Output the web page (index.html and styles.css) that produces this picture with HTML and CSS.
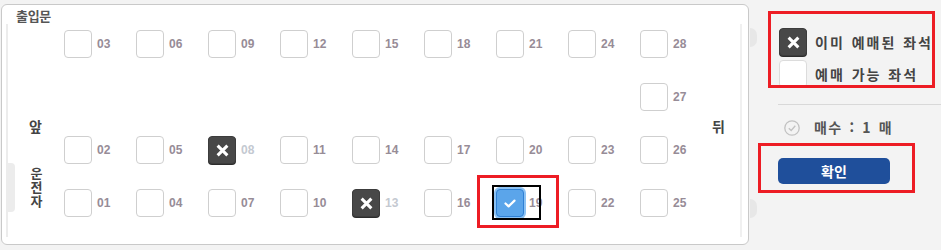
FILE: index.html
```html
<!DOCTYPE html>
<html lang="ko">
<head>
<meta charset="utf-8">
<title>좌석 선택</title>
<link rel="stylesheet" href="styles.css">
</head>
<body>
<div class="page">
  <section class="panel">
    <div class="door">출입문</div>
    <div class="deck">
      <div class="side-left">
        <span class="front">앞</span>
        <div class="driver"><span class="driver-tab"></span><span class="driver-text">운전자</span></div>
      </div>
      <div class="side-right"><span class="back">뒤</span></div>

      <div class="seat"><span class="box"></span><span class="num">03</span></div>
      <div class="seat"><span class="box"></span><span class="num">06</span></div>
      <div class="seat"><span class="box"></span><span class="num">09</span></div>
      <div class="seat"><span class="box"></span><span class="num">12</span></div>
      <div class="seat"><span class="box"></span><span class="num">15</span></div>
      <div class="seat"><span class="box"></span><span class="num">18</span></div>
      <div class="seat"><span class="box"></span><span class="num">21</span></div>
      <div class="seat"><span class="box"></span><span class="num">24</span></div>
      <div class="seat"><span class="box"></span><span class="num">28</span></div>

      <div class="gap"></div><div class="gap"></div><div class="gap"></div><div class="gap"></div>
      <div class="gap"></div><div class="gap"></div><div class="gap"></div><div class="gap"></div>
      <div class="seat"><span class="box"></span><span class="num">27</span></div>

      <div class="seat"><span class="box"></span><span class="num">02</span></div>
      <div class="seat"><span class="box"></span><span class="num">05</span></div>
      <div class="seat booked"><span class="box"><svg class="x" viewBox="0 0 12 12"><path d="M1.5 1.5 L10.5 10.5 M10.5 1.5 L1.5 10.5"/></svg></span><span class="num">08</span></div>
      <div class="seat"><span class="box"></span><span class="num">11</span></div>
      <div class="seat"><span class="box"></span><span class="num">14</span></div>
      <div class="seat"><span class="box"></span><span class="num">17</span></div>
      <div class="seat"><span class="box"></span><span class="num">20</span></div>
      <div class="seat"><span class="box"></span><span class="num">23</span></div>
      <div class="seat"><span class="box"></span><span class="num">26</span></div>

      <div class="seat"><span class="box"></span><span class="num">01</span></div>
      <div class="seat"><span class="box"></span><span class="num">04</span></div>
      <div class="seat"><span class="box"></span><span class="num">07</span></div>
      <div class="seat"><span class="box"></span><span class="num">10</span></div>
      <div class="seat booked"><span class="box"><svg class="x" viewBox="0 0 12 12"><path d="M1.5 1.5 L10.5 10.5 M10.5 1.5 L1.5 10.5"/></svg></span><span class="num">13</span></div>
      <div class="seat"><span class="box"></span><span class="num">16</span></div>
      <div class="seat selected"><span class="box"><svg class="check" viewBox="0 0 12 9"><path d="M1.5 4.5 L4.6 7.4 L10.5 1.6"/></svg></span><span class="num">19</span></div>
      <div class="seat"><span class="box"></span><span class="num">22</span></div>
      <div class="seat"><span class="box"></span><span class="num">25</span></div>
    </div>
  </section>

  <aside class="side">
    <div class="legend">
      <div class="legend-row"><span class="box booked-box"><svg class="x" viewBox="0 0 12 12"><path d="M1.5 1.5 L10.5 10.5 M10.5 1.5 L1.5 10.5"/></svg></span><span class="legend-text">이미 예매된 좌석</span></div>
      <div class="legend-row"><span class="box free-box"></span><span class="legend-text">예매 가능 좌석</span></div>
    </div>
    <div class="rule"></div>
    <div class="count">
      <svg class="count-icon" viewBox="0 0 16 16"><circle cx="8" cy="8" r="7.2"/><path d="M4.8 8.2 L7.2 10.5 L11.3 5.8"/></svg>
      <span class="count-text">매수 : 1 매</span>
    </div>
    <div class="confirm-wrap">
      <button class="confirm" type="button">확인</button>
    </div>
  </aside>
</div>
</body>
</html>
```

FILE: styles.css
```css
html, body {
  margin: 0;
  padding: 0;
}

body {
  background: #f3f3f3;
  font-family: "Noto Sans CJK KR", "Noto Sans", sans-serif;
  color: #444;
}

.page {
  display: flex;
  width: 941px;
  height: 250px;
  overflow: hidden;
}

.panel {
  position: relative;
  margin: 4px 0 0 1px;
  width: 748px;
  height: 241px;
  box-sizing: border-box;
  border: 1px solid #c9c9c9;
  border-radius: 6px;
  background: #fff;
  display: flex;
  flex-direction: column;
  flex: none;
}

.panel::before,
.panel::after {
  content: "";
  position: absolute;
  right: -9px;
  width: 7px;
  height: 19px;
  background: #e7e7e7;
  border-radius: 0 9px 9px 0;
}

.panel::before {
  top: 23px;
}

.panel::after {
  top: 194px;
}

.door {
  height: 19px;
  box-sizing: border-box;
  padding: 3px 0 0 14px;
  font-size: 13px;
  line-height: 16px;
  font-weight: 700;
  color: #555;
  letter-spacing: -0.3px;
}

.deck {
  margin: 0 6px 7px 4px;
  flex: 1;
  border-left: 2px solid #ececec;
  border-right: 2px solid #f0f0f0;
  padding-top: 6px;
  display: grid;
  grid-template-columns: 56px repeat(9, 72px) 28px;
  grid-template-rows: repeat(4, 28px);
  row-gap: 25px;
  align-content: start;
}

.side-left {
  grid-column: 1;
  grid-row: 1 / 5;
  padding-top: 88px;
  display: flex;
  flex-direction: column;
  align-items: flex-start;
}

.front,
.back {
  display: block;
  font-size: 14px;
  line-height: 16px;
  font-weight: 700;
  color: #444;
}

.front {
  margin-left: 21px;
}

.driver {
  margin-top: 29px;
  display: flex;
  align-items: center;
}

.driver-tab {
  width: 7px;
  height: 49px;
  background: #ececec;
  border-radius: 0 4px 4px 0;
}

.driver-text {
  margin-left: 14px;
  writing-mode: vertical-lr;
  text-orientation: upright;
  font-size: 13px;
  line-height: 14px;
  letter-spacing: 1px;
  font-weight: 700;
  color: #444;
}

.side-right {
  grid-column: 11;
  grid-row: 1 / 5;
  padding-top: 88px;
}

.seat {
  position: relative;
  display: flex;
  align-items: center;
  gap: 5px;
  height: 28px;
}

.box {
  width: 28px;
  height: 28px;
  box-sizing: border-box;
  border: 1px solid #cfcfcf;
  border-radius: 4px;
  background: #fff;
  display: flex;
  align-items: center;
  justify-content: center;
  flex: none;
}

.num {
  font-family: "Liberation Sans", Arial, sans-serif;
  font-size: 12px;
  font-weight: 700;
  color: #978c97;
}

.booked .box,
.booked-box {
  background: #484848;
  border-color: #3c3c3c;
  box-shadow: 0 1px 0 #2c2c2c;
}

.booked .num {
  color: #c4c9d1;
}

.x {
  width: 13px;
  height: 13px;
}

.x path {
  fill: none;
  stroke: #fff;
  stroke-width: 2.8;
}

.selected .box {
  background: #5ba5ea;
  border-color: #2f80d4;
  box-shadow: 0 0 0 2px #8cc2f3;
}

.check {
  width: 12px;
  height: 9px;
}

.check path {
  fill: none;
  stroke: #fff;
  stroke-width: 2.2;
  stroke-linecap: round;
  stroke-linejoin: round;
}

.selected::before {
  content: "";
  position: absolute;
  left: -19px;
  top: -14px;
  width: 82px;
  height: 53px;
  box-sizing: border-box;
  border: 3px solid #ed1c24;
}

.selected::after {
  content: "";
  position: absolute;
  left: -4px;
  top: -4px;
  width: 49px;
  height: 35px;
  box-sizing: border-box;
  border: 2px solid #000;
}

/* right column */
.side {
  width: 192px;
  flex: none;
  display: flex;
  flex-direction: column;
  align-items: flex-start;
}

.legend {
  margin: 11px 0 0 19px;
  width: 167px;
  height: 77px;
  box-sizing: border-box;
  border: 3px solid #ed1c24;
  padding: 14px 0 0 8px;
  overflow: hidden;
  display: flex;
  flex-direction: column;
  gap: 4px;
}

.legend-row {
  display: flex;
  align-items: center;
  gap: 8px;
  height: 28px;
}

.free-box {
  border-color: #dcdcdc;
}

.legend-text {
  font-size: 14px;
  line-height: 28px;
  font-weight: 700;
  letter-spacing: 2px;
  word-spacing: 1px;
  color: #444;
  white-space: nowrap;
}

.rule {
  margin: 16px 0 0 29px;
  width: 163px;
  height: 1px;
  background: #d8d8d8;
}

.count {
  margin: 14px 0 0 35px;
  display: flex;
  align-items: center;
  gap: 14px;
  height: 17px;
}

.count-icon {
  width: 16px;
  height: 16px;
}

.count-icon circle,
.count-icon path {
  fill: none;
  stroke: #c2c2c2;
  stroke-width: 1.3;
}

.count-text {
  font-size: 14px;
  line-height: 17px;
  font-weight: 700;
  letter-spacing: 1.4px;
  word-spacing: 1.5px;
  color: #555;
  white-space: nowrap;
}

.confirm-wrap {
  margin: 7px 0 0 9px;
  width: 157px;
  height: 50px;
  box-sizing: border-box;
  border: 3px solid #ed1c24;
  padding: 12px 0 0 17px;
}

.confirm {
  display: block;
  width: 112px;
  height: 26px;
  border: none;
  border-radius: 5px;
  background: #1f4f9b;
  color: #fff;
  font-family: "Noto Sans CJK KR", "Noto Sans", sans-serif;
  font-size: 14px;
  font-weight: 700;
  line-height: 26px;
  padding: 0;
}
```
